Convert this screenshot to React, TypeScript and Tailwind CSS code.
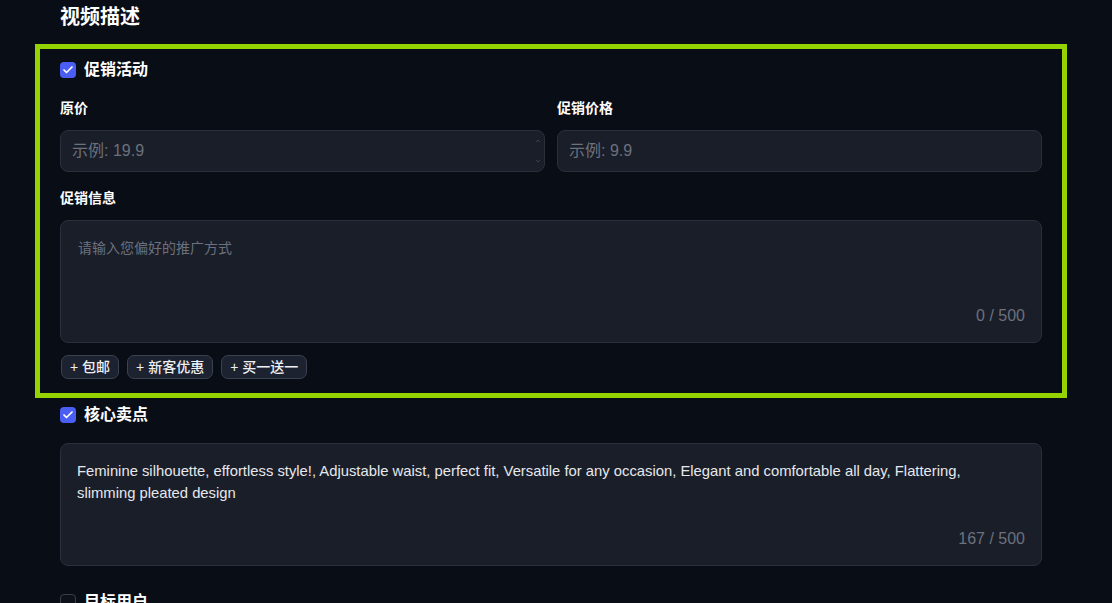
import { Check } from 'lucide-react'

const FONT = { fontFamily: '"Liberation Sans", "Noto Sans CJK SC", sans-serif' }

function CheckRow({ label, checked }: { label: string; checked: boolean }) {
  return (
    <div className="flex h-5 items-center gap-2">
      {checked ? (
        <span className="flex size-4 items-center justify-center rounded-[4px] bg-[#4b5ef4]">
          <Check className="size-3 text-white" strokeWidth={3.5} />
        </span>
      ) : (
        <span className="size-4 rounded-[4px] border border-[#3a3f4c] bg-[#0d1119]" />
      )}
      <span className="text-base font-bold leading-5 text-white">{label}</span>
    </div>
  )
}

function TextBox({ text, placeholder, count }: { text?: string; placeholder?: string; count: number }) {
  return (
    <div className="flex h-[123px] flex-col justify-between rounded-lg border border-[#2a2f3b] bg-[#1a1e29] pr-4 pb-4">
      {text ? (
        <p className="pt-4 pr-4 pl-4 text-[14.8px] leading-[22px] text-[#e6e8ec]">{text}</p>
      ) : (
        <p className="pt-[17px] pl-[17px] text-sm leading-5 text-[#6b717d]">{placeholder}</p>
      )}
      <p className="text-right text-base leading-5 text-[#6b717d]">{count} / 500</p>
    </div>
  )
}

function PriceInput({ placeholder, spinner }: { placeholder: string; spinner?: boolean }) {
  return (
    <div className="flex h-[42px] items-center justify-between rounded-lg border border-[#2a2f3b] bg-[#1a1e29] pl-[11px] pr-[3px]">
      <span className="text-base text-[#6b717d]">{placeholder}</span>
      {spinner ? (
        <svg width="6" height="30" viewBox="0 0 6 30" className="text-[#3a404c]" fill="none" stroke="currentColor" strokeWidth="1">
          <path d="M1 6 L3 4 L5 6" />
          <path d="M1 24 L3 26 L5 24" />
        </svg>
      ) : null}
    </div>
  )
}

export default function App() {
  const tags = ['包邮', '新客优惠', '买一送一']
  return (
    <div className="min-h-screen overflow-hidden bg-[#090d16]" style={FONT}>
      <div className="h-[603px]">
        <h1 className="ml-[60px] pt-[5px] text-xl font-bold leading-6 text-white">视频描述</h1>

        <section className="mt-[15px] ml-[35px] w-[1032px] border-[5px] border-[#95d300] px-5 pt-[11px] pb-[14px]">
          <CheckRow label="促销活动" checked />

          <div className="mt-[19px] grid grid-cols-2 gap-3">
            <div>
              <p className="text-sm font-bold leading-[18px] text-white">原价</p>
              <div className="mt-[13px]">
                <PriceInput placeholder="示例: 19.9" spinner />
              </div>
            </div>
            <div>
              <p className="text-sm font-bold leading-[18px] text-white">促销价格</p>
              <div className="mt-[13px]">
                <PriceInput placeholder="示例: 9.9" />
              </div>
            </div>
          </div>

          <p className="mt-[17px] text-sm font-bold leading-[18px] text-white">促销信息</p>
          <div className="mt-[13px]">
            <TextBox placeholder="请输入您偏好的推广方式" count={0} />
          </div>

          <div className="mt-3 flex gap-2 pl-px">
            {tags.map((t) => (
              <button
                key={t}
                className="h-6 rounded-[7px] border border-[#3b414e] bg-[#1d2230] px-2 text-sm font-medium leading-none text-[#eef0f3]"
              >
                + {t}
              </button>
            ))}
          </div>
        </section>

        <div className="ml-[60px] w-[982px]">
          <div className="mt-[7px]">
            <CheckRow label="核心卖点" checked />
          </div>
          <div className="mt-[18px]">
            <TextBox
              text="Feminine silhouette, effortless style!, Adjustable waist, perfect fit, Versatile for any occasion, Elegant and comfortable all day, Flattering, slimming pleated design"
              count={167}
            />
          </div>
          <div className="mt-[26px]">
            <CheckRow label="目标用户" checked={false} />
          </div>
        </div>
      </div>
    </div>
  )
}
